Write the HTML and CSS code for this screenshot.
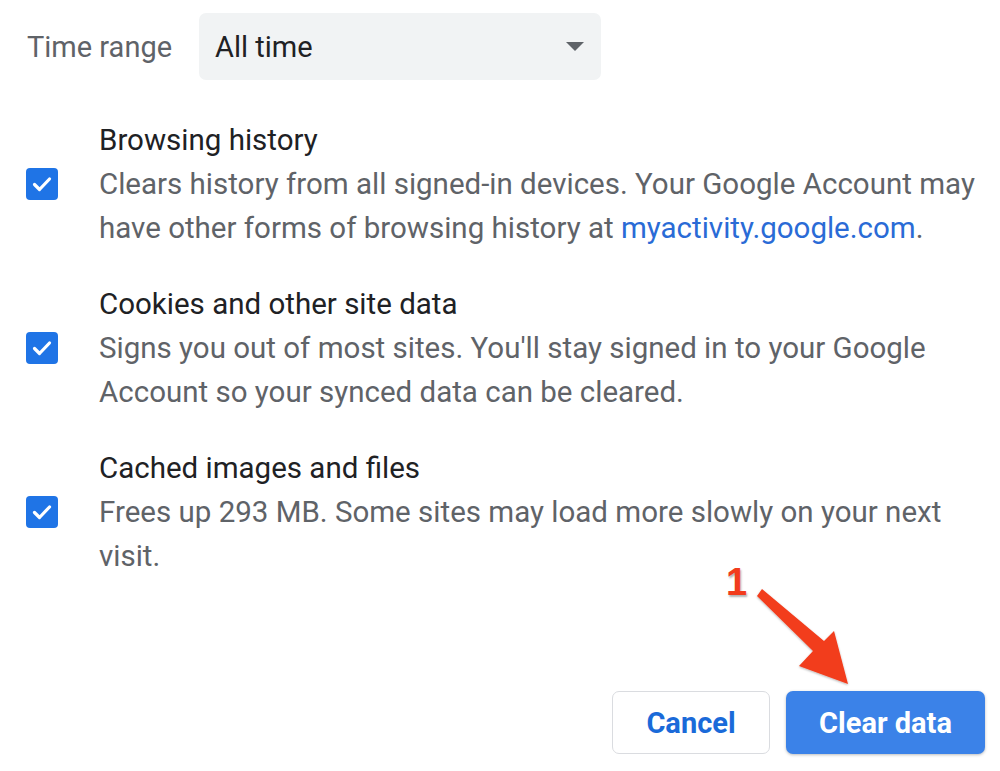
FILE: index.html
```html
<!DOCTYPE html>
<html>
<head>
<meta charset="utf-8">
<link rel="stylesheet" href="styles.css">
</head>
<body>
<div class="dialog">
  <div class="range-row">
    <span class="range-label">Time range</span>
    <div class="select">
      <span class="select-value">All time</span>
      <svg class="select-arrow" width="18" height="9" viewBox="0 0 18 9"><path d="M0 0h18L9 9z" fill="#5f6368"/></svg>
    </div>
  </div>

  <div class="options">
    <div class="option">
      <span class="checkbox"><svg width="32" height="32" viewBox="0 0 32 32"><path d="M8.5 16.5l5 5 10-10.5" fill="none" stroke="#fff" stroke-width="3.2" stroke-linecap="round" stroke-linejoin="round"/></svg></span>
      <div class="option-text">
        <div class="option-title">Browsing history</div>
        <div class="option-desc">Clears history from all signed-in devices. Your Google Account may have other forms of browsing history at <a class="link">myactivity.google.com</a>.</div>
      </div>
    </div>
    <div class="option">
      <span class="checkbox"><svg width="32" height="32" viewBox="0 0 32 32"><path d="M8.5 16.5l5 5 10-10.5" fill="none" stroke="#fff" stroke-width="3.2" stroke-linecap="round" stroke-linejoin="round"/></svg></span>
      <div class="option-text">
        <div class="option-title">Cookies and other site data</div>
        <div class="option-desc">Signs you out of most sites. You'll stay signed in to your Google Account so your synced data can be cleared.</div>
      </div>
    </div>
    <div class="option">
      <span class="checkbox"><svg width="32" height="32" viewBox="0 0 32 32"><path d="M8.5 16.5l5 5 10-10.5" fill="none" stroke="#fff" stroke-width="3.2" stroke-linecap="round" stroke-linejoin="round"/></svg></span>
      <div class="option-text">
        <div class="option-title">Cached images and files</div>
        <div class="option-desc">Frees up 293 MB. Some sites may load more slowly on your next visit.</div>
      </div>
    </div>
  </div>

  <div class="actions">
    <button class="btn btn-cancel">Cancel</button>
    <button class="btn btn-primary">Clear data</button>
  </div>
</div>

<span class="annot-num">1</span>
<svg class="annot-arrow" width="1000" height="771" viewBox="0 0 1000 771">
  <defs>
    <filter id="sh" x="-20%" y="-20%" width="140%" height="140%">
      <feDropShadow dx="0" dy="1" stdDeviation="1.2" flood-color="#000" flood-opacity="0.3"/>
    </filter>
  </defs>
  <polygon filter="url(#sh)" fill="#f23c1c" points="757,596 762,589 824,641 834,631 848,684 799,666 813,651"/>
</svg>
</body>
</html>
```

FILE: styles.css
```css
html, body {
  margin: 0;
  padding: 0;
  background: #fff;
}
body {
  width: 1000px;
  height: 771px;
  position: relative;
  overflow: hidden;
  font-family: Roboto, "Liberation Sans", Arial, sans-serif;
}
.dialog {
  padding: 13px 15px 0 26px;
  display: flex;
  flex-direction: column;
}
.range-row {
  display: flex;
  align-items: center;
}
.range-label {
  font-size: 29px;
  color: #5f6368;
  width: 172px;
  padding-left: 1px;
}
.select {
  width: 402px;
  height: 67px;
  box-sizing: border-box;
  background: #f1f3f4;
  border-radius: 7px;
  display: flex;
  align-items: center;
  justify-content: space-between;
  padding: 0 17px 0 16px;
}
.select-value {
  font-size: 29px;
  color: #202124;
}
.select-arrow {
  display: block;
}
.options {
  margin-top: 38px;
  display: flex;
  flex-direction: column;
  gap: 32px;
}
.option {
  display: flex;
  align-items: center;
  gap: 41px;
}
.checkbox {
  flex: none;
  width: 32px;
  height: 32px;
  background: #1f74e6;
  border-radius: 4px;
  display: block;
}
.checkbox svg {
  display: block;
}
.option-text {
  font-size: 29.5px;
  line-height: 44px;
  width: 880px;
}
.option-title {
  color: #202124;
}
.option-desc {
  color: #5f6368;
}
.link {
  color: #2a6bd6;
  text-decoration: none;
}
.actions {
  margin-top: 113px;
  display: flex;
  justify-content: flex-end;
  gap: 16px;
}
.btn {
  height: 63px;
  border-radius: 7px;
  font-family: Roboto, "Liberation Sans", Arial, sans-serif;
  font-size: 29px;
  font-weight: 700;
  cursor: pointer;
  padding: 0;
}
.btn-cancel {
  width: 158px;
  background: #fff;
  border: 1.5px solid #dadce0;
  color: #1a6ad9;
}
.btn-primary {
  width: 199px;
  background: #3b82e8;
  border: none;
  color: #fff;
  box-shadow: 0 1px 3px rgba(60, 64, 67, 0.35);
}
.annot-num {
  position: absolute;
  left: 726px;
  top: 561px;
  font-family: "Liberation Sans", Arial, sans-serif;
  font-weight: 700;
  font-size: 38px;
  color: #f23c1c;
  text-shadow: 1px 2px 2px rgba(0, 0, 0, 0.3);
}
.annot-arrow {
  position: absolute;
  left: 0;
  top: 0;
  pointer-events: none;
}
```
